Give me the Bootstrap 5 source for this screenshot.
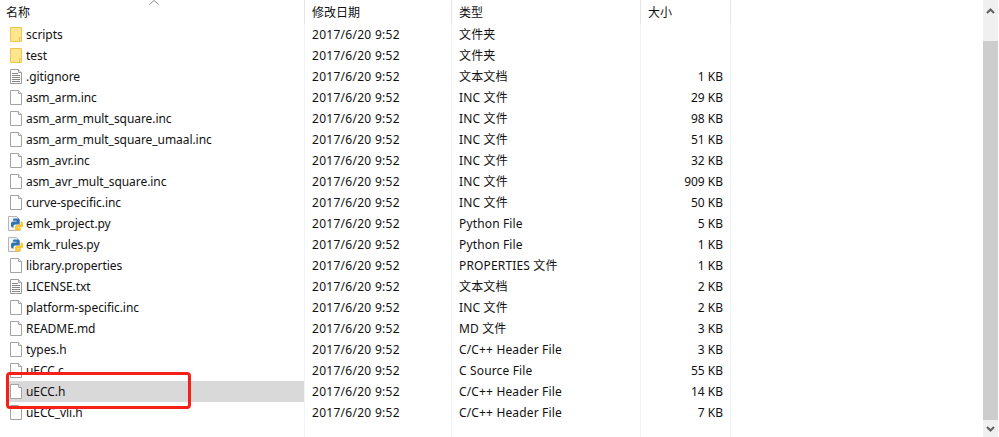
<!DOCTYPE html>
<html lang="zh-CN">
<head>
  <meta charset="UTF-8" />
  <meta name="viewport" content="width=device-width, initial-scale=1" />
  <title>文件列表</title>
  <link href="https://cdn.jsdelivr.net/npm/bootstrap@5.3.0/dist/css/bootstrap.min.css" rel="stylesheet" />
  <style>
    html, body { height: 437px; overflow: hidden; }
    body { font-family: "Noto Sans", "Noto Sans CJK SC", sans-serif; font-size: 12px; color: #111; background: #fff; }

    .file-pane { height: 437px; }
    .file-table { width: 983px; table-layout: fixed; margin: 0; border-collapse: separate; border-spacing: 0; --bs-table-color: #111; }
    .file-table th, .file-table td { padding: 0; height: 21px; line-height: 21px; font-weight: 400; white-space: nowrap; border-right: 1px solid #f0f4f9; border-bottom: 0; letter-spacing: -.02px; }
    .file-table th { height: 24px; line-height: 23px; padding-top: 1px; vertical-align: top; border-right-color: #e5e5e5; position: relative; }
    .file-table th:last-child, .file-table td:last-child { border-right: 0; }
    .file-table .filler td { height: 14px; }

    .col-name { width: 305px; }
    .col-date { width: 147px; }
    .col-kind { width: 189px; }
    .col-size { width: 90px; }

    .head-name { padding-left: 6px !important; }
    .head-date, .cell-date { padding-left: 7px !important; }
    .head-kind, .cell-kind { padding-left: 7px !important; }
    .head-size { padding-left: 7px !important; }
    .file-table .cell-date { letter-spacing: .28px; }
    .file-table .cell-kind { letter-spacing: .15px; }
    .cell-size { padding-right: 7px !important; text-align: right; }

    .name-wrap { display: flex; align-items: center; height: 21px; margin-left: 8px; gap: 3px; }
    .name-wrap.picked { background: #d9d9d9; }
    .name-wrap svg { flex: none; width: 14px; height: 17px; margin-left: 1px; }
    .name-wrap svg.py-icon { width: 18px; margin-left: -1px; margin-right: -2px; }
    .file-label { letter-spacing: -.06px; }

    .sort-mark { position: absolute; left: 149px; top: 0; width: 10px; height: 5px; }

    .red-mark { position: absolute; left: 6px; top: 372px; width: 185px; height: 37px; border: 3px solid #f5201a; border-radius: 4px; }

    .scroll-rail { width: 15px; margin-right: 1px; background: #f0f0f0; }
    .scroll-btn { height: 37px; }
    .scroll-btn.down { height: 17px; }
    .scroll-btn svg { width: 9px; height: 6px; }
    .scroll-thumb { background: #cdcdcd; }
  </style>
</head>
<body>

  <!-- shared icons -->
  <svg width="0" height="0" class="position-absolute">
    <symbol id="ico-folder" viewBox="0 0 14 17">
      <path d="M1.500 1.500h11v14h-11z" fill="#fde68e" stroke="#efc653" />
      <path d="M12.500 11.500h-2v4" fill="none" stroke="#efc653" />
    </symbol>
    <symbol id="ico-file" viewBox="0 0 14 17">
      <path d="M1.500 1.500h8l3 3v11h-11z" fill="#fff" stroke="#a3a3a3" />
      <path d="M9.500 1.500v3h3" fill="#f0f0f0" stroke="#a3a3a3" />
    </symbol>
    <symbol id="ico-text" viewBox="0 0 14 17">
      <path d="M1.500 1.500h8l3 3v11h-11z" fill="#fff" stroke="#9a9a9a" />
      <path d="M9.500 1.500v3h3" fill="#f0f0f0" stroke="#9a9a9a" />
      <path d="M3 5.500h6M3 7.500h8M3 9.500h8M3 11.500h8M3 13.500h8" stroke="#858585" />
    </symbol>
    <symbol id="ico-py" viewBox="0 0 18 17">
      <path d="M1.500 1.500h8l3 3v11h-11z" fill="#f4f4f4" stroke="#b5b5b5" />
      <path d="M7.500 3.500h3.500q1.500 0 1.500 1.500v3q0 1.500-1.500 1.500h-3q-1.500 0-1.500 1.500v1.500h-1q-1.500 0-1.500-2v-2q0-2 2-2h3.500v-.7h-3.500v-1q0-1.300 1-1.300z" fill="#2f74b5" />
      <path d="M13.500 6.500h1q1.500 0 1.500 2v2q0 2-2 2h-3.500v.7h3.500v1q0 1.300-1 1.300h-3.500q-1.500 0-1.500-1.500v-2.500q0-1.500 1.500-1.500h3q1 0 1-1.500z" fill="#fbc92e" />
    </symbol>
  </svg>

  <div class="file-pane d-flex justify-content-between">
    <table class="table table-borderless file-table">
      <colgroup>
        <col class="col-name" /><col class="col-date" /><col class="col-kind" /><col class="col-size" /><col />
      </colgroup>
      <thead>
        <tr>
          <th class="head-name">名称
            <svg class="sort-mark" viewBox="0 0 10 5"><path d="M.5 4.500 5 .5l4.500 4" fill="none" stroke="#8a8a8a" /></svg>
          </th>
          <th class="head-date">修改日期</th>
          <th class="head-kind">类型</th>
          <th class="head-size">大小</th>
          <th></th>
        </tr>
      </thead>
      <tbody>
        <tr><td><div class="name-wrap"><svg><use href="#ico-folder" /></svg><span class="file-label">scripts</span></div></td><td class="cell-date">2017/6/20 9:52</td><td class="cell-kind">文件夹</td><td class="cell-size"></td><td></td></tr>
        <tr><td><div class="name-wrap"><svg><use href="#ico-folder" /></svg><span class="file-label">test</span></div></td><td class="cell-date">2017/6/20 9:52</td><td class="cell-kind">文件夹</td><td class="cell-size"></td><td></td></tr>
        <tr><td><div class="name-wrap"><svg><use href="#ico-text" /></svg><span class="file-label">.gitignore</span></div></td><td class="cell-date">2017/6/20 9:52</td><td class="cell-kind">文本文档</td><td class="cell-size">1 KB</td><td></td></tr>
        <tr><td><div class="name-wrap"><svg><use href="#ico-file" /></svg><span class="file-label">asm_arm.inc</span></div></td><td class="cell-date">2017/6/20 9:52</td><td class="cell-kind">INC 文件</td><td class="cell-size">29 KB</td><td></td></tr>
        <tr><td><div class="name-wrap"><svg><use href="#ico-file" /></svg><span class="file-label">asm_arm_mult_square.inc</span></div></td><td class="cell-date">2017/6/20 9:52</td><td class="cell-kind">INC 文件</td><td class="cell-size">98 KB</td><td></td></tr>
        <tr><td><div class="name-wrap"><svg><use href="#ico-file" /></svg><span class="file-label">asm_arm_mult_square_umaal.inc</span></div></td><td class="cell-date">2017/6/20 9:52</td><td class="cell-kind">INC 文件</td><td class="cell-size">51 KB</td><td></td></tr>
        <tr><td><div class="name-wrap"><svg><use href="#ico-file" /></svg><span class="file-label">asm_avr.inc</span></div></td><td class="cell-date">2017/6/20 9:52</td><td class="cell-kind">INC 文件</td><td class="cell-size">32 KB</td><td></td></tr>
        <tr><td><div class="name-wrap"><svg><use href="#ico-file" /></svg><span class="file-label">asm_avr_mult_square.inc</span></div></td><td class="cell-date">2017/6/20 9:52</td><td class="cell-kind">INC 文件</td><td class="cell-size">909 KB</td><td></td></tr>
        <tr><td><div class="name-wrap"><svg><use href="#ico-file" /></svg><span class="file-label">curve-specific.inc</span></div></td><td class="cell-date">2017/6/20 9:52</td><td class="cell-kind">INC 文件</td><td class="cell-size">50 KB</td><td></td></tr>
        <tr><td><div class="name-wrap"><svg class="py-icon"><use href="#ico-py" /></svg><span class="file-label">emk_project.py</span></div></td><td class="cell-date">2017/6/20 9:52</td><td class="cell-kind">Python File</td><td class="cell-size">5 KB</td><td></td></tr>
        <tr><td><div class="name-wrap"><svg class="py-icon"><use href="#ico-py" /></svg><span class="file-label">emk_rules.py</span></div></td><td class="cell-date">2017/6/20 9:52</td><td class="cell-kind">Python File</td><td class="cell-size">1 KB</td><td></td></tr>
        <tr><td><div class="name-wrap"><svg><use href="#ico-file" /></svg><span class="file-label">library.properties</span></div></td><td class="cell-date">2017/6/20 9:52</td><td class="cell-kind">PROPERTIES 文件</td><td class="cell-size">1 KB</td><td></td></tr>
        <tr><td><div class="name-wrap"><svg><use href="#ico-text" /></svg><span class="file-label">LICENSE.txt</span></div></td><td class="cell-date">2017/6/20 9:52</td><td class="cell-kind">文本文档</td><td class="cell-size">2 KB</td><td></td></tr>
        <tr><td><div class="name-wrap"><svg><use href="#ico-file" /></svg><span class="file-label">platform-specific.inc</span></div></td><td class="cell-date">2017/6/20 9:52</td><td class="cell-kind">INC 文件</td><td class="cell-size">2 KB</td><td></td></tr>
        <tr><td><div class="name-wrap"><svg><use href="#ico-file" /></svg><span class="file-label">README.md</span></div></td><td class="cell-date">2017/6/20 9:52</td><td class="cell-kind">MD 文件</td><td class="cell-size">3 KB</td><td></td></tr>
        <tr><td><div class="name-wrap"><svg><use href="#ico-file" /></svg><span class="file-label">types.h</span></div></td><td class="cell-date">2017/6/20 9:52</td><td class="cell-kind">C/C++ Header File</td><td class="cell-size">3 KB</td><td></td></tr>
        <tr><td><div class="name-wrap"><svg><use href="#ico-file" /></svg><span class="file-label">uECC.c</span></div></td><td class="cell-date">2017/6/20 9:52</td><td class="cell-kind">C Source File</td><td class="cell-size">55 KB</td><td></td></tr>
        <tr><td><div class="name-wrap picked"><svg><use href="#ico-file" /></svg><span class="file-label">uECC.h</span></div></td><td class="cell-date">2017/6/20 9:52</td><td class="cell-kind">C/C++ Header File</td><td class="cell-size">14 KB</td><td></td></tr>
        <tr><td><div class="name-wrap"><svg><use href="#ico-file" /></svg><span class="file-label">uECC_vli.h</span></div></td><td class="cell-date">2017/6/20 9:52</td><td class="cell-kind">C/C++ Header File</td><td class="cell-size">7 KB</td><td></td></tr>
        <tr class="filler"><td></td><td></td><td></td><td></td><td></td></tr>
      </tbody>
    </table>

    <!-- Scrollbar -->
    <div class="scroll-rail d-flex flex-column">
      <div class="scroll-btn d-flex justify-content-center pt-1 mt-1">
        <svg viewBox="0 0 9 6"><path d="M1 5l3.500-3.500L8 5" fill="none" stroke="#606060" stroke-width="2" /></svg>
      </div>
      <div class="scroll-thumb flex-grow-1"></div>
      <div class="scroll-btn down d-flex justify-content-center align-items-center">
        <svg viewBox="0 0 9 6"><path d="M1 1l3.500 3.500L8 1" fill="none" stroke="#606060" stroke-width="2" /></svg>
      </div>
    </div>
  </div>

  <!-- annotation drawn over the list -->
  <div class="red-mark"></div>

  <script src="https://cdn.jsdelivr.net/npm/bootstrap@5.3.0/dist/js/bootstrap.bundle.min.js"></script>
</body>
</html>
